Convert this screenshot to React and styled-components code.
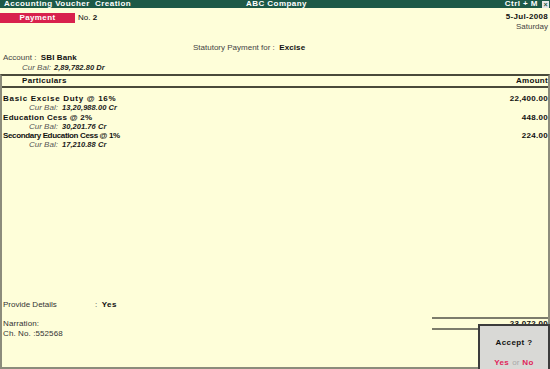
import React from "react";
import styled, { createGlobalStyle } from "styled-components";

const GlobalStyle = createGlobalStyle`
  html, body {
    margin: 0;
    padding: 0;
    background: #fefed9;
  }
  body {
    font-family: "Liberation Sans", Arial, sans-serif;
  }
`;

const Screen = styled.div`
  position: relative;
  width: 550px;
  height: 369px;
  overflow: hidden;
  background: #fefed9;
  color: #111;
  font-size: 8px;
  line-height: 9px;
  display: flex;
  flex-direction: column;
`;

const TitleBar = styled.div`
  height: 8px;
  background: #1d5947;
  color: #fff;
  font-weight: bold;
  font-size: 8px;
  line-height: 8px;
  letter-spacing: 0.45px;
  display: grid;
  grid-template-columns: 1fr auto 1fr;
  align-items: center;
  padding: 0 1px 0 4px;
`;

const TitleRight = styled.div`
  display: flex;
  justify-content: flex-end;
  align-items: center;
  gap: 4px;
`;

const CloseBox = styled.span`
  width: 7px;
  height: 7px;
  background: #e8e8e8;
  color: #1d5947;
  font-size: 7px;
  line-height: 7px;
  text-align: center;
  letter-spacing: 0;
`;

const Head = styled.div`
  display: flex;
  justify-content: space-between;
  padding: 4px 2px 0 0;
  height: 24px;
`;

const VoucherNo = styled.div`
  display: flex;
  align-items: flex-start;
  padding-top: 1px;
  gap: 3px;
`;

const TypeTag = styled.div`
  width: 75px;
  height: 10px;
  background: #d8214d;
  color: #fff;
  font-weight: bold;
  letter-spacing: 0.4px;
  line-height: 10px;
  text-align: center;
`;

const DateCol = styled.div`
  text-align: right;
  line-height: 10px;
`;

const Bold = styled.span`
  font-weight: bold;
  letter-spacing: ${(p) => p.$tracking ?? 0.1}px;
  color: ${(p) => p.$color || "inherit"};
`;

const Light = styled.span`
  color: #444;
`;

const Statutory = styled.div`
  margin: 7px 0 0 193px;
  height: 10px;
`;

const Account = styled.div`
  padding-left: 3px;
  height: 10px;
`;

const CurBal = styled.div`
  display: flex;
  padding-left: ${(p) => p.$indent}px;
  font-style: italic;
  height: ${(p) => p.$h}px;
  line-height: ${(p) => p.$h}px;
`;

const BalLabel = styled.span`
  width: ${(p) => p.$w}px;
  color: #555;
`;

const BalValue = styled.span`
  font-weight: bold;
  font-size: 7.5px;
  letter-spacing: 0.05px;
  color: #1a1a1a;
`;

const Table = styled.div`
  flex: 1;
  display: flex;
  flex-direction: column;
  margin-top: 1px;
  border-top: 2px solid #4a4a3a;
  border-right: 2px solid #8c8c7c;
  border-left: 2px solid #8c8c7c;
  border-bottom: 2px solid #8c8c7c;
`;

const TableHead = styled.div`
  display: flex;
  justify-content: space-between;
  height: 10px;
  line-height: 10px;
  padding: 0 0 0 20px;
  border-bottom: 2px solid #4a4a3a;
`;

const Rows = styled.div`
  padding-top: 6px;
  display: flex;
  flex-direction: column;
`;

const Entry = styled.div`
  display: flex;
  justify-content: space-between;
  height: 9px;
  line-height: 9px;
  padding: 0 0 0 1px;
`;

const Spacer = styled.div`
  flex: 1;
`;

const Detail = styled.div`
  display: flex;
  padding-left: 1px;
  height: 9px;
  margin-bottom: 8px;
`;

const Label = styled.span`
  width: 92px;
  color: #333;
`;

const Footer = styled.div`
  display: flex;
  justify-content: space-between;
  height: 50px;
`;

const Narration = styled.div`
  padding: 2px 0 0 1px;
  color: #333;
  line-height: 10px;
  letter-spacing: 0.1px;
`;

const TotalBox = styled.div`
  width: 116px;
  height: 9px;
  border-top: 2px solid #7c7c6c;
  border-bottom: 2px solid #7c7c6c;
  text-align: right;
  line-height: 10px;
`;

const AcceptBox = styled.div`
  position: absolute;
  right: 0;
  bottom: 0;
  width: 72px;
  height: 45px;
  box-sizing: border-box;
  background: #d9d9d6;
  border: 2px solid #3c3c3c;
  border-bottom: none;
  display: flex;
  flex-direction: column;
  align-items: center;
  justify-content: space-between;
  padding: 12px 0 2px;
`;

const Or = styled.span`
  color: #a8a8a8;
  margin: 0 3px;
`;

const entries = [
  { name: "Basic Excise Duty @ 16%", tracking: 0.7, bal: "13,20,988.00 Cr", amount: "22,400.00" },
  { name: "Education Cess @ 2%", tracking: 0.3, bal: "30,201.76 Cr", amount: "448.00" },
  { name: "Secondary Education Cess @ 1%", tracking: -0.35, bal: "17,210.88 Cr", amount: "224.00" },
];

export default function App() {
  return (
    <Screen>
      <GlobalStyle />
      <TitleBar>
        <span>Accounting Voucher&nbsp; Creation</span>
        <span>ABC Company</span>
        <TitleRight>
          <span>Ctrl + M</span>
          <CloseBox>×</CloseBox>
        </TitleRight>
      </TitleBar>

      <Head>
        <VoucherNo>
          <TypeTag>Payment</TypeTag>
          <span>
            No. <Bold $tracking={0.3}>2</Bold>
          </span>
        </VoucherNo>
        <DateCol>
          <Bold $tracking={0.3}>5-Jul-2008</Bold>
          <br />
          <Light>Saturday</Light>
        </DateCol>
      </Head>

      <Statutory>
        <Light>Statutory Payment for :</Light>&nbsp; <Bold>Excise</Bold>
      </Statutory>
      <Account>
        <Light>Account :</Light>&nbsp; <Bold>SBI Bank</Bold>
      </Account>
      <CurBal $indent={22} $h={10}>
        <BalLabel $w={32}>Cur Bal:</BalLabel>
        <BalValue>2,89,782.80 Dr</BalValue>
      </CurBal>

      <Table>
        <TableHead>
          <Bold $tracking={0.3}>Particulars</Bold>
          <Bold $tracking={0.3}>Amount</Bold>
        </TableHead>
        <Rows>
          {entries.map((e) => (
            <div key={e.name}>
              <Entry>
                <Bold $tracking={e.tracking}>{e.name}</Bold>
                <Bold $tracking={0.3}>{e.amount}</Bold>
              </Entry>
              <CurBal $indent={27} $h={9.5}>
                <BalLabel $w={33}>Cur Bal:</BalLabel>
                <BalValue>{e.bal}</BalValue>
              </CurBal>
            </div>
          ))}
        </Rows>
        <Spacer />
        <Detail>
          <Label>Provide Details</Label>
          <span>
            <Light>:</Light>&nbsp; <Bold $tracking={0.5}>Yes</Bold>
          </span>
        </Detail>
        <Footer>
          <Narration>
            Narration:
            <br />
            Ch. No. :552568
          </Narration>
          <TotalBox>
            <Bold $tracking={0.3}>23,072.00</Bold>
          </TotalBox>
        </Footer>
      </Table>

      <AcceptBox>
        <Bold $tracking={0.4}>Accept ?</Bold>
        <span>
          <Bold $tracking={0.4} $color="#e0245a">Yes</Bold>
          <Or>or</Or>
          <Bold $tracking={0.4} $color="#e0245a">No</Bold>
        </span>
      </AcceptBox>
    </Screen>
  );
}
